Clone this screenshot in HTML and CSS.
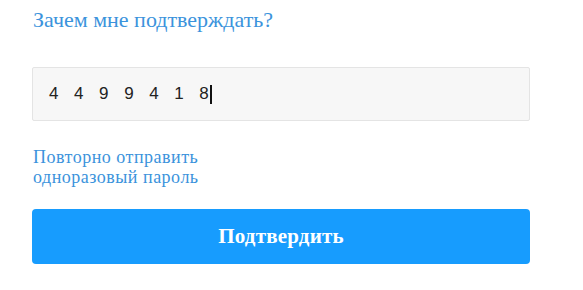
FILE: index.html
```html
<!DOCTYPE html>
<html lang="ru">
<head>
    <meta charset="UTF-8">
    <meta name="viewport" content="width=device-width, initial-scale=1.0">
    <title>Подтверждение</title>
    <link rel="stylesheet" href="styles.css">
</head>
<body>
    <main class="verify">
        <a href="#" class="why-link">Зачем мне подтверждать?</a>
        <div class="code-field">
            <span class="code-value">4499418</span><span class="caret"></span>
        </div>
        <a href="#" class="resend-link">Повторно отправить<br>одноразовый пароль</a>
        <button class="btn-confirm">Подтвердить</button>
    </main>
</body>
</html>
```

FILE: styles.css
```css
body {
    margin: 0;
    background-color: #ffffff;
    font-family: 'Liberation Serif', 'DejaVu Serif', serif;
}
.verify {
    width: 498px;
    padding: 8px 0 0 32px;
    display: flex;
    flex-direction: column;
}
.why-link {
    color: #3b93dc;
    font-size: 22px;
    text-decoration: none;
    margin-left: 1px;
    line-height: 24px;
}
.code-field {
    margin-top: 35px;
    height: 52px;
    background-color: #f7f7f7;
    border: 1px solid #e4e4e4;
    border-radius: 2px;
    display: flex;
    align-items: center;
    padding-left: 16px;
}
.code-value {
    font-family: 'Liberation Sans', Arial, sans-serif;
    font-size: 17px;
    letter-spacing: 15.6px;
    color: #222;
    margin-right: -15.6px;
}
.caret {
    width: 2px;
    height: 19px;
    background-color: #111;
    margin-left: 1px;
}
.resend-link {
    margin-top: 26px;
    margin-left: 1px;
    color: #3b93dc;
    font-size: 18px;
    letter-spacing: 0.5px;
    line-height: 20px;
    text-decoration: none;
}
.btn-confirm {
    margin-top: 22px;
    height: 55px;
    background-color: #179cfe;
    border: none;
    border-radius: 4px;
    color: #ffffff;
    font-family: 'Liberation Serif', 'DejaVu Serif', serif;
    font-weight: bold;
    font-size: 21px;
    letter-spacing: 0.2px;
    cursor: pointer;
}
```
